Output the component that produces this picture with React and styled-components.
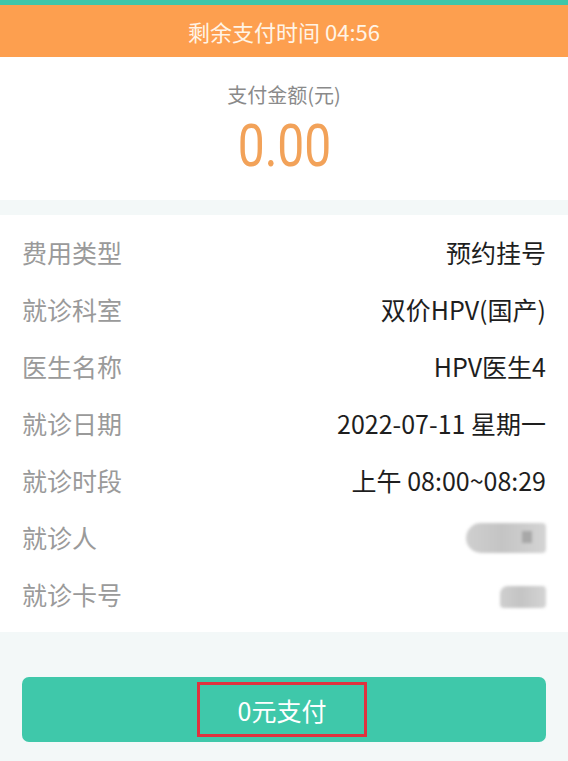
import styled, { createGlobalStyle } from "styled-components";

const GlobalStyle = createGlobalStyle`
    body {
        margin: 0;
        background: #f3f8f8;
        font-family: "Noto Sans CJK SC", "Noto Sans", sans-serif;
    }
`

const rows = [
    { label: "费用类型", value: "预约挂号" },
    { label: "就诊科室", value: "双价HPV(国产)" },
    { label: "医生名称", value: "HPV医生4" },
    { label: "就诊日期", value: "2022-07-11 星期一" },
    { label: "就诊时段", value: "上午 08:00~08:29" },
    { label: "就诊人", blur: "name" },
    { label: "就诊卡号", blur: "card" },
]

const App = () => {
    return (
        <Page>
            <GlobalStyle />
            <TopStrip />
            <Countdown>剩余支付时间 04:56</Countdown>
            <AmountCard>
                <AmountLabel>支付金额(元)</AmountLabel>
                <Amount>0.00</Amount>
            </AmountCard>
            <InfoList>
                {rows.map((row) => (
                    <Row key={row.label}>
                        <Label>{row.label}</Label>
                        {row.blur ? (
                            <Blurred $kind={row.blur}>
                                {row.blur === "name" && <BlurBit />}
                            </Blurred>
                        ) : (
                            <Value>{row.value}</Value>
                        )}
                    </Row>
                ))}
            </InfoList>
            <Footer>
                <PayButton>
                    <Highlight>0元支付</Highlight>
                </PayButton>
            </Footer>
        </Page>
    )
}

const Page = styled.div`
    width: 568px;
    min-height: 761px;
    background: #f3f8f8;
`

const TopStrip = styled.div`
    height: 5px;
    background: #3ec6a8;
`

const Countdown = styled.div`
    height: 52px;
    background: #fd9f4f;
    color: #fff4e6;
    font-size: 22px;
    display: flex;
    align-items: center;
    justify-content: center;
`

const AmountCard = styled.div`
    height: 143px;
    background: #fff;
    display: flex;
    flex-direction: column;
    align-items: center;
    padding-top: 22px;
    box-sizing: border-box;
    margin-bottom: 15px;
`

const AmountLabel = styled.div`
    font-size: 20px;
    color: #8a8a8a;
    line-height: 32px;
`

const Amount = styled.div`
    font-family: "Roboto", "Noto Sans", sans-serif;
    font-size: 60px;
    color: #f2a259;
    line-height: 66px;
    margin-top: 2px;
    transform: scaleX(0.8);
`

const InfoList = styled.div`
    background: #fff;
    padding: 8px 22px 10px;
`

const Row = styled.div`
    height: 57px;
    display: flex;
    align-items: center;
    justify-content: space-between;
`

const Label = styled.span`
    font-size: 25px;
    color: #9a9a9a;
`

const Value = styled.span`
    font-size: 25px;
    color: #1e1e1e;
`

const Blurred = styled.div`
    position: relative;
    height: ${(p) => (p.$kind === "name" ? "30px" : "22px")};
    width: ${(p) => (p.$kind === "name" ? "80px" : "46px")};
    border-radius: ${(p) => (p.$kind === "name" ? "15px 4px 4px 15px" : "8px 4px 4px 4px")};
    background: linear-gradient(90deg, #cfcfcf 0%, #c4c4c4 45%, #d4d4d4 100%);
    filter: blur(1.5px);
    margin-top: ${(p) => (p.$kind === "name" ? "2px" : "6px")};
`

const BlurBit = styled.div`
    position: absolute;
    top: 8px;
    right: 14px;
    width: 10px;
    height: 12px;
    background: #a8a8a8;
`

const Footer = styled.div`
    padding: 45px 22px 19px;
`

const PayButton = styled.div`
    height: 65px;
    background: #3fc8aa;
    border-radius: 7px;
    display: flex;
    align-items: center;
    justify-content: center;
`

const Highlight = styled.div`
    width: 170px;
    height: 55px;
    box-sizing: border-box;
    border: 3px solid #e0323e;
    display: flex;
    align-items: center;
    justify-content: center;
    color: #fff;
    font-size: 25px;
    margin-left: -4px;
`

export default App;
